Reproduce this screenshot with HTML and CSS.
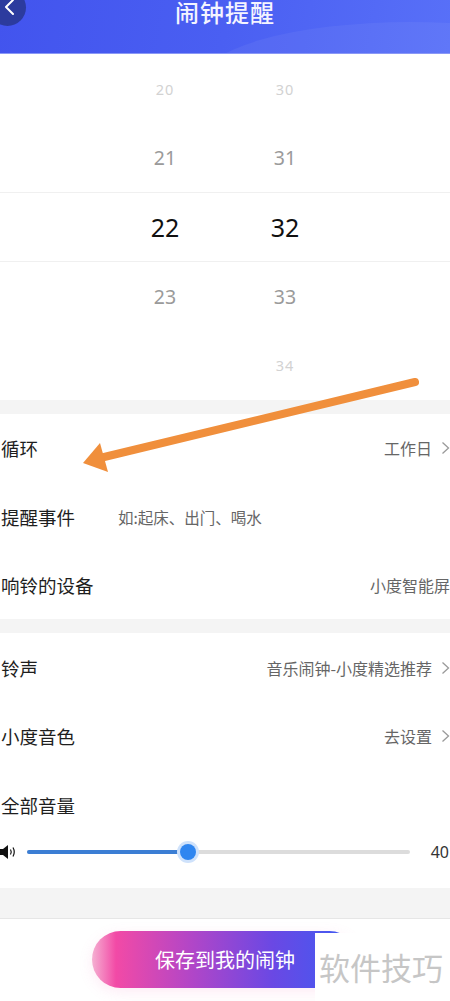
FILE: index.html
```html
<!DOCTYPE html>
<html lang="zh">
<head>
<meta charset="utf-8">
<title>闹钟提醒</title>
<link rel="stylesheet" href="styles.css">
</head>
<body>
<div class="page">
  <header class="topbar">
    <div class="back">
      <svg width="12" height="18" viewBox="0 0 12 18"><polyline points="10,2 3,9 10,16" fill="none" stroke="#fff" stroke-width="2" stroke-linecap="round" stroke-linejoin="round"/></svg>
    </div>
    <div class="wave"></div>
    <h1 class="title">闹钟提醒</h1>
  </header>

  <section class="picker">
    <div class="prow far"><span>20</span><span>30</span></div>
    <div class="prow near"><span>21</span><span>31</span></div>
    <div class="prow sel"><span>22</span><span>32</span></div>
    <div class="prow near"><span>23</span><span>33</span></div>
    <div class="prow far"><span></span><span>34</span></div>
  </section>

  <div class="gap g1"></div>

  <section class="group">
    <div class="row">
      <span class="label">循环</span>
      <span class="value">工作日<svg class="chev" width="9" height="14" viewBox="0 0 9 14"><polyline points="1.5,1.5 7.5,7 1.5,12.5" fill="none" stroke="#9a9a9a" stroke-width="1.3"/></svg></span>
    </div>
    <div class="row start">
      <span class="label">提醒事件</span>
      <span class="placeholder">如:起床、出门、喝水</span>
    </div>
    <div class="row">
      <span class="label">响铃的设备</span>
      <span class="value">小度智能屏</span>
    </div>
  </section>

  <div class="gap g2"></div>

  <section class="group">
    <div class="row">
      <span class="label">铃声</span>
      <span class="value">音乐闹钟-小度精选推荐<svg class="chev" width="9" height="14" viewBox="0 0 9 14"><polyline points="1.5,1.5 7.5,7 1.5,12.5" fill="none" stroke="#9a9a9a" stroke-width="1.3"/></svg></span>
    </div>
    <div class="row">
      <span class="label">小度音色</span>
      <span class="value">去设置<svg class="chev" width="9" height="14" viewBox="0 0 9 14"><polyline points="1.5,1.5 7.5,7 1.5,12.5" fill="none" stroke="#9a9a9a" stroke-width="1.3"/></svg></span>
    </div>
    <div class="row">
      <span class="label">全部音量</span>
    </div>
    <div class="volume">
      <svg class="spk" width="17" height="16" viewBox="0 0 17 16">
        <path d="M0 5 H3 L8 1 V15 L3 11 H0 Z" fill="#111"/>
        <path d="M10.5 5.5 Q12 8 10.5 10.5" fill="none" stroke="#111" stroke-width="1.2"/>
        <path d="M13 3.5 Q15.5 8 13 12.5" fill="none" stroke="#111" stroke-width="1.2"/>
      </svg>
      <div class="track">
        <div class="fill" style="width:42%"></div>
        <div class="knob" style="left:42%"></div>
      </div>
      <span class="vol">40</span>
    </div>
  </section>

  <div class="gap g3"></div>

  <footer class="bottom">
    <button class="save">保存到我的闹钟</button>
    <div class="mark">软件技巧</div>
  </footer>

  <svg class="arrow" width="450" height="1001" viewBox="0 0 450 1001">
    <line x1="415" y1="382" x2="100" y2="458" stroke="#f08f3c" stroke-width="8" stroke-linecap="round"/>
    <polygon points="83,463 100,443 108,472" fill="#f08f3c"/>
  </svg>
</div>
</body>
</html>
```

FILE: styles.css
```css
html, body {
  margin: 0;
  padding: 0;
  background: #fff;
}
.page {
  position: relative;
  width: 450px;
  height: 1001px;
  overflow: hidden;
  font-family: "Noto Sans CJK SC", "Noto Sans", sans-serif;
  color: #222;
}
.topbar {
  position: relative;
  height: 54px;
  background: linear-gradient(100deg, #4254ee 0%, #4a5ff2 50%, #5870f8 100%);
  border-bottom: 1px solid #8a98f6;
  box-sizing: border-box;
  overflow: hidden;
}
.wave {
  position: absolute;
  left: 200px;
  top: 22px;
  width: 420px;
  height: 120px;
  border-radius: 50%;
  background: rgba(255, 255, 255, 0.05);
}
.back {
  position: absolute;
  left: -11px;
  top: -11px;
  width: 37px;
  height: 37px;
  border-radius: 50%;
  background: #2c3b9e;
  display: flex;
  align-items: flex-end;
  justify-content: flex-end;
  box-sizing: border-box;
  padding: 0 11px 10px 0;
}
.title {
  position: relative;
  margin: 0;
  text-align: center;
  font-size: 24px;
  line-height: 23px;
  font-weight: 500;
  color: #f4f4ff;
  letter-spacing: 1px;
}
.picker {
  display: flex;
  flex-direction: column;
}
.prow {
  height: 69.2px;
  display: grid;
  grid-template-columns: 120px 120px;
  justify-content: center;
  align-items: center;
  text-align: center;
  font-family: "Noto Sans", "Liberation Sans", sans-serif;
  box-sizing: border-box;
}
.prow.far {
  font-size: 14.5px;
  color: #d2d2d2;
  letter-spacing: 1px;
}
.prow.near {
  font-size: 19.5px;
  color: #9a9a9a;
}
.prow.sel {
  font-size: 25px;
  color: #111;
  border-top: 1px solid #f0f0f0;
  border-bottom: 1px solid #f0f0f0;
}
.gap {
  background: #f4f4f4;
}
.g1 { height: 14px; }
.g2 { height: 14px; }
.g3 { height: 30px; border-bottom: 1px solid #e6e6e6; }
.group {
  display: flex;
  flex-direction: column;
}
.row {
  height: 68.5px;
  display: flex;
  align-items: center;
  justify-content: space-between;
  padding-left: 1px;
}
.row.start {
  justify-content: flex-start;
}
.label {
  font-size: 18.5px;
  color: #1e1e1e;
}
.placeholder {
  margin-left: 43px;
  font-size: 15.5px;
  color: #666;
}
.value {
  display: flex;
  align-items: center;
  font-size: 16px;
  color: #666;
}
.chev {
  margin-left: 9px;
}
.volume {
  height: 49px;
  display: flex;
  align-items: center;
  padding-bottom: 23px;
  box-sizing: border-box;
}
.spk {
  flex: none;
}
.track {
  position: relative;
  margin-left: 10px;
  width: 383px;
  height: 4px;
  border-radius: 2px;
  background: #dcdcdc;
}
.fill {
  height: 100%;
  border-radius: 2px;
  background: #3b7ed4;
}
.knob {
  position: absolute;
  top: 50%;
  width: 16px;
  height: 16px;
  margin: -8px 0 0 -8px;
  border-radius: 50%;
  background: #2f86f0;
  box-shadow: 0 0 0 3px #cfe2fb;
}
.vol {
  margin-left: auto;
  font-family: "Noto Sans", "Liberation Sans", sans-serif;
  font-size: 16px;
  color: #333;
  padding-right: 1px;
}
.bottom {
  position: relative;
  height: 82px;
  display: flex;
  justify-content: center;
  padding-top: 12px;
  box-sizing: border-box;
}
.save {
  width: 266px;
  height: 57px;
  border: none;
  border-radius: 29px;
  background: linear-gradient(90deg, #f5b0d2 0%, #f24aa6 9%, #b046c8 38%, #6a48e4 68%, #3a5ef4 100%);
  color: #fff;
  font-family: "Noto Sans CJK SC", sans-serif;
  font-size: 20px;
  padding: 0;
  box-shadow: 0 4px 14px rgba(240, 120, 190, 0.15);
}
.mark {
  position: absolute;
  left: 315px;
  top: 14px;
  width: 135px;
  height: 68px;
  background: #fff;
  color: #c6c6c6;
  font-size: 31px;
  line-height: 68px;
  padding-left: 4px;
  box-sizing: border-box;
  white-space: nowrap;
}
.arrow {
  position: absolute;
  left: 0;
  top: 0;
  pointer-events: none;
}
```
